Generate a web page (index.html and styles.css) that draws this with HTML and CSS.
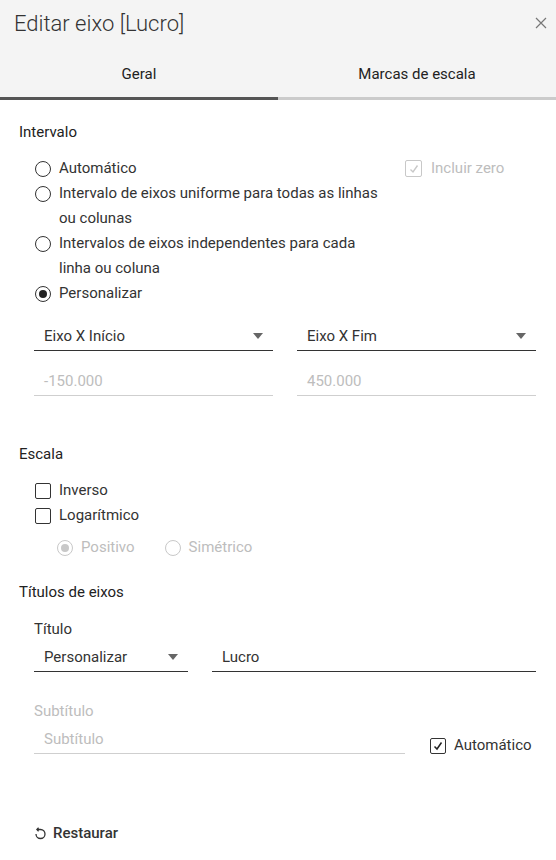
FILE: index.html
```html
<!DOCTYPE html>
<html lang="pt">
<head>
<meta charset="utf-8">
<title>Editar eixo [Lucro]</title>
<link rel="stylesheet" href="styles.css">
</head>
<body>
<div class="dialog">
  <header class="header">
    <div class="titlebar">
      <h1 class="title">Editar eixo [Lucro]</h1>
      <button class="close" aria-label="Fechar">
        <svg width="12" height="12" viewBox="0 0 12 12"><path d="M1 1 L11 11 M11 1 L1 11" stroke="#777" stroke-width="1.2" fill="none"/></svg>
      </button>
    </div>
    <nav class="tabs">
      <div class="tab active">Geral</div>
      <div class="tab">Marcas de escala</div>
    </nav>
  </header>

  <main class="content">
    <section class="sec sec-range">
      <h2 class="sec-title">Intervalo</h2>
      <div class="opts">
        <div class="opt-first">
          <label class="radio"><span class="rb"></span><span class="lbl">Automático</span></label>
          <label class="check disabled"><span class="cb checked"><svg width="12" height="12" viewBox="0 0 12 12"><path d="M2.5 6.5 L5 9 L9.5 2.5" stroke="#c8c8c8" stroke-width="1.4" fill="none"/></svg></span><span class="lbl">Incluir zero</span></label>
        </div>
        <label class="radio"><span class="rb"></span><span class="lbl wrap">Intervalo de eixos uniforme para todas as linhas ou colunas</span></label>
        <label class="radio"><span class="rb"></span><span class="lbl wrap">Intervalos de eixos independentes para cada linha ou coluna</span></label>
        <label class="radio"><span class="rb on"></span><span class="lbl">Personalizar</span></label>
      </div>
      <div class="fields">
        <div class="select"><span>Eixo X Início</span><span class="caret"></span></div>
        <div class="select"><span>Eixo X Fim</span><span class="caret"></span></div>
        <div class="input muted">-150.000</div>
        <div class="input muted">450.000</div>
      </div>
    </section>

    <section class="sec sec-scale">
      <h2 class="sec-title">Escala</h2>
      <div class="opts">
        <label class="check"><span class="cb"></span><span class="lbl">Inverso</span></label>
        <label class="check"><span class="cb"></span><span class="lbl">Logarítmico</span></label>
        <div class="subopts">
          <label class="radio disabled"><span class="rb on"></span><span class="lbl">Positivo</span></label>
          <label class="radio disabled"><span class="rb"></span><span class="lbl">Simétrico</span></label>
        </div>
      </div>
    </section>

    <section class="sec sec-titles">
      <h2 class="sec-title">Títulos de eixos</h2>
      <div class="titles">
        <div class="field-label">Título</div>
        <div class="title-row">
          <div class="select"><span>Personalizar</span><span class="caret"></span></div>
          <div class="input">Lucro</div>
        </div>
        <div class="field-label disabled-text sub-label">Subtítulo</div>
        <div class="subtitle-row">
          <div class="input muted light">Subtítulo</div>
          <label class="check"><span class="cb checked"><svg width="12" height="12" viewBox="0 0 12 12"><path d="M2.5 6.5 L5 9 L9.5 2.5" stroke="#222" stroke-width="1.5" fill="none"/></svg></span><span class="lbl">Automático</span></label>
        </div>
      </div>
    </section>

    <button class="reset">
      <svg width="12" height="13" viewBox="0 0 12 13"><path d="M3 2.5 H6.5 A4.5 4.5 0 1 1 2 7" stroke="#333" stroke-width="1.3" fill="none"/><path d="M4.6 0.8 L2.9 2.5 L4.6 4.2" stroke="#333" stroke-width="1.3" fill="none"/></svg>
      <span>Restaurar</span>
    </button>
  </main>
</div>
</body>
</html>
```

FILE: styles.css
```css
* { box-sizing: border-box; }
html, body { margin: 0; padding: 0; background: #fff; }
body {
  font-family: Roboto, "Liberation Sans", sans-serif;
  font-size: 15px;
  color: #333;
}
.dialog { width: 556px; height: 860px; background: #fff; }

.header { background: #f4f4f4; }
.titlebar {
  height: 46px;
  display: flex;
  align-items: center;
  justify-content: space-between;
  padding: 0 7px 0 14px;
}
.title {
  margin: 0;
  font-size: 22px;
  font-weight: 300;
  color: #333;
}
.close {
  border: 0; background: none; padding: 0;
  width: 16px; height: 16px;
  display: flex; align-items: center; justify-content: center;
}
.tabs { display: flex; }
.tab {
  flex: 1;
  height: 54px;
  display: flex;
  align-items: center;
  justify-content: center;
  padding-top: 4px;
  font-size: 15px;
  font-weight: 400;
  color: #222;
  border-bottom: 3px solid #cbcbcb;
}
.tab.active { border-bottom-color: #555; }

.content { padding: 0 20px 0 19px; }
.sec-title {
  margin: 0;
  font-size: 15px;
  font-weight: 400;
  line-height: 20px;
  color: #222;
}
.sec-range { padding-top: 22px; }
.opts { padding-left: 16px; margin-top: 14px; display: flex; flex-direction: column; }

.radio, .check {
  display: flex;
  align-items: flex-start;
  gap: 8px;
  line-height: 25px;
}
.rb {
  flex: none;
  width: 16px; height: 16px;
  margin-top: 4.5px;
  border: 1px solid #333;
  border-radius: 50%;
  display: flex; align-items: center; justify-content: center;
}
.rb.on::after {
  content: "";
  width: 8px; height: 8px;
  border-radius: 50%;
  background: #222;
}
.cb {
  flex: none;
  width: 16px; height: 16px;
  margin-top: 4.5px;
  border: 1px solid #333;
  border-radius: 2px;
  display: flex; align-items: center; justify-content: center;
}
.check.disabled .cb { border-color: #c8c8c8; width: 17px; height: 17px; margin-top: 4px; }
.disabled .lbl, .disabled-text { color: #bdbdbd; }
.radio.disabled .rb { border-color: #c8c8c8; }
.radio.disabled .rb.on::after { background: #c8c8c8; }
.lbl.wrap { max-width: 322px; }

.opt-first { display: grid; grid-template-columns: 370px auto; }
.opt-first .check { gap: 9px; }

.fields {
  display: grid;
  grid-template-columns: 1fr 1fr;
  column-gap: 24px;
  row-gap: 15px;
  padding-left: 15px;
  margin-top: 15px;
}
.select, .input {
  height: 30px;
  display: flex;
  align-items: center;
  justify-content: space-between;
  padding: 0 10px 0 10px;
  border-bottom: 1px solid #333;
}
.input.muted { color: #bdbdbd; border-bottom-color: #cfcfcf; }
.caret {
  width: 0; height: 0;
  border-left: 5px solid transparent;
  border-right: 5px solid transparent;
  border-top: 6px solid #666;
}

.sec-scale { margin-top: 48px; }
.sec-scale .opts { margin-top: 14px; }
.subopts {
  display: flex;
  gap: 30px;
  padding-left: 22px;
  margin-top: 7px;
}

.sec-titles { margin-top: 22px; }
.titles { padding-left: 15px; }
.field-label { line-height: 20px; margin-top: 17px; }
.sub-label { margin-top: 29px; }
.title-row {
  display: grid;
  grid-template-columns: 154px 1fr;
  column-gap: 24px;
  margin-top: 3px;
}
.subtitle-row {
  display: flex;
  align-items: flex-end;
  margin-top: 3px;
}
.subtitle-row .input { width: 371px; }
.subtitle-row .check { margin-left: 25px; margin-bottom: -4px; }

.reset {
  margin-top: 70px;
  margin-left: 15px;
  border: 0; background: none; padding: 0;
  display: flex; align-items: center; gap: 7px;
  font-family: inherit;
  font-size: 15px;
  font-weight: 500;
  color: #333;
}
```
